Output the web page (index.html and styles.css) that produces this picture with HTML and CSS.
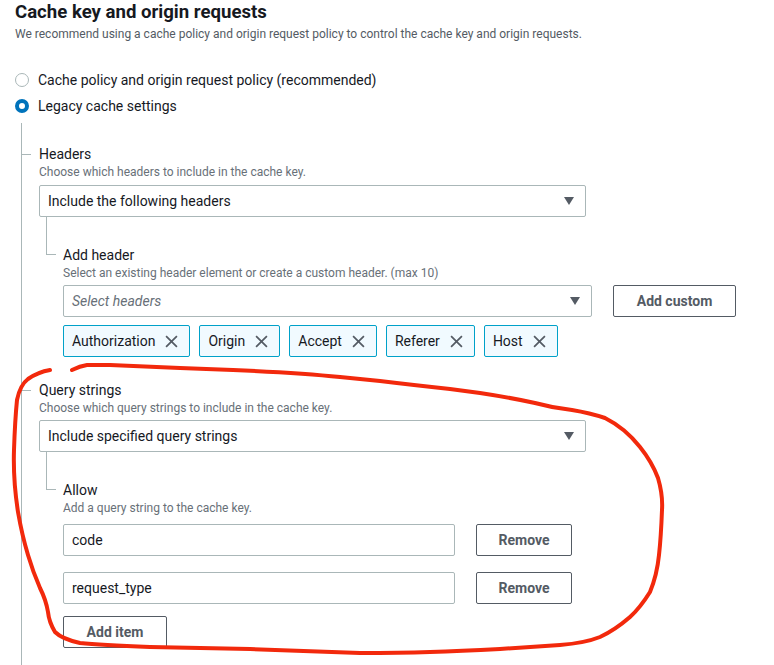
FILE: index.html
```html
<!DOCTYPE html>
<html>
<head>
<meta charset="utf-8">
<link rel="stylesheet" href="styles.css">
</head>
<body>
<div class="page">
  <h2 class="title">Cache key and origin requests</h2>
  <p class="subtitle">We recommend using a cache policy and origin request policy to control the cache key and origin requests.</p>

  <div class="radios">
    <label class="radio"><span class="dot"></span>Cache policy and origin request policy (recommended)</label>
    <label class="radio"><span class="dot checked"></span>Legacy cache settings</label>
  </div>

  <div class="tree">
    <div class="branch headers">
      <div class="label">Headers</div>
      <div class="desc">Choose which headers to include in the cache key.</div>
      <div class="select wide"><span>Include the following headers</span><span class="caret"></span></div>
      <div class="subtree">
        <div class="label">Add header</div>
        <div class="desc">Select an existing header element or create a custom header. (max 10)</div>
        <div class="row">
          <div class="select multi"><span class="ph">Select headers</span><span class="caret"></span></div>
          <button class="btn custom">Add custom</button>
        </div>
        <div class="tokens">
          <span class="token">Authorization<svg viewBox="0 0 12 12"><path d="M1 1L11 11M11 1L1 11"/></svg></span>
          <span class="token">Origin<svg viewBox="0 0 12 12"><path d="M1 1L11 11M11 1L1 11"/></svg></span>
          <span class="token">Accept<svg viewBox="0 0 12 12"><path d="M1 1L11 11M11 1L1 11"/></svg></span>
          <span class="token">Referer<svg viewBox="0 0 12 12"><path d="M1 1L11 11M11 1L1 11"/></svg></span>
          <span class="token">Host<svg viewBox="0 0 12 12"><path d="M1 1L11 11M11 1L1 11"/></svg></span>
        </div>
      </div>
    </div>

    <div class="branch query">
      <div class="label">Query strings</div>
      <div class="desc">Choose which query strings to include in the cache key.</div>
      <div class="select wide"><span>Include specified query strings</span><span class="caret"></span></div>
      <div class="subtree">
        <div class="label">Allow</div>
        <div class="desc">Add a query string to the cache key.</div>
        <div class="row item first">
          <div class="input">code</div>
          <button class="btn remove">Remove</button>
        </div>
        <div class="row item">
          <div class="input">request_type</div>
          <button class="btn remove">Remove</button>
        </div>
        <button class="btn additem">Add item</button>
      </div>
    </div>
  </div>

  <svg class="scribble" width="774" height="665" viewBox="0 0 774 665">
    <path d="M72,370 Q80,366 87,365 L110,365 Q133,366 180,368 L233,370 Q300,373 340,377 L380,381 Q413,385 450,389 L480,393 Q513,398 535,403 Q553,408 572,410 Q590,413 605,418 Q625,428 640,447 Q652,462 658,478 Q663,495 662,510 Q661,537 659,555 Q657,575 650,592 Q640,608 630,617 Q615,630 600,637 Q585,643 560,645 Q530,647 500,649 Q460,651 430,652 Q400,653 360,653 Q300,651 250,649 Q200,648 150,647 Q100,645 80,643 Q62,639 55,632 Q49,622 48,612 Q46,600 40,588 Q33,572 28,555 Q22,535 18,512 Q13,480 14,450 Q15,420 17,400 Q20,385 28,379 Q38,372 50,370"/>
  </svg>
</div>
</body>
</html>
```

FILE: styles.css
```css
* { box-sizing: border-box; }
html, body { margin: 0; padding: 0; background: #fff; }
body {
  font-family: Roboto, "Liberation Sans", Arial, sans-serif;
  color: #16191f;
  font-size: 14px;
}
.page {
  position: relative;
  width: 774px;
  height: 665px;
  overflow: hidden;
  padding-left: 15px;
}
.title {
  margin: 0;
  padding-top: 1px;
  font-size: 18.6px;
  line-height: 22px;
  font-weight: 700;
}
.subtitle {
  margin: 3px 0 0;
  font-size: 12px;
  line-height: 16px;
  color: #545b64;
}
.radios {
  margin-top: 28px;
  display: flex;
  flex-direction: column;
  gap: 6px;
}
.radio {
  display: flex;
  align-items: center;
  height: 20px;
  font-size: 14px;
  line-height: 20px;
}
.dot {
  width: 14px;
  height: 14px;
  border-radius: 50%;
  border: 1.5px solid #aab7b8;
  margin-right: 9px;
  flex: none;
}
.dot.checked {
  border: 4px solid #0073bb;
  background: #fff;
}
.tree {
  margin-left: 6px;
  margin-top: 7px;
  border-left: 1px solid #aab7b8;
  padding-left: 17px;
  padding-top: 21px;
  min-height: 560px;
}
.branch { position: relative; }
.branch::before {
  content: "";
  position: absolute;
  left: -18px;
  top: 10px;
  width: 10px;
  border-top: 1px solid #aab7b8;
}
.label {
  font-size: 14px;
  line-height: 20px;
}
.desc {
  font-size: 12px;
  line-height: 16px;
  color: #687078;
}
.select, .input {
  display: flex;
  align-items: center;
  justify-content: space-between;
  height: 32px;
  border: 1px solid #aab7b8;
  border-radius: 2px;
  padding: 0 11px 0 8px;
  font-size: 14px;
  background: #fff;
}
.select.wide { width: 547px; margin-top: 4px; }
.headers > .select.wide { margin-top: 5px; }
.caret {
  width: 0; height: 0;
  border-left: 5.5px solid transparent;
  border-right: 5.5px solid transparent;
  border-top: 8px solid #545b64;
}
.ph { font-style: italic; color: #687078; }
.subtree {
  position: relative;
  margin-left: 7px;
  padding-left: 17px;
  padding-top: 28px;
}
.subtree::before {
  content: "";
  position: absolute;
  left: 0;
  top: 0;
  width: 9px;
  height: 37px;
  border-left: 1px solid #aab7b8;
  border-bottom: 1px solid #aab7b8;
}
.subtree .desc { margin-bottom: 4px; }
.row {
  display: flex;
  align-items: center;
  gap: 21px;
}
.select.multi { width: 529px; }
.btn {
  font-family: inherit;
  height: 32px;
  border: 1px solid #545b64;
  border-radius: 2px;
  background: #fff;
  color: #545b64;
  font-weight: 700;
  font-size: 14px;
  padding: 0;
  cursor: pointer;
}
.btn.custom { width: 123px; }
.tokens {
  display: flex;
  gap: 9px;
  margin-top: 8px;
}
.token {
  display: flex;
  align-items: center;
  gap: 10px;
  height: 32px;
  padding: 0 11px 0 8px;
  background: #f1faff;
  border: 1px solid #00a1c9;
  border-radius: 2px;
  font-size: 14px;
}
.token svg {
  width: 13px;
  height: 13px;
  fill: none;
  stroke: #545b64;
  stroke-width: 1.6;
}
.branch.headers { margin-bottom: 23px; }
.row.item { margin-bottom: 16px; }
.row.item.first { margin-top: 8px; }
.input { width: 392px; }
.btn.remove { width: 96px; }
.btn.additem { width: 104px; margin-top: -4px; }
.scribble {
  position: absolute;
  left: 0;
  top: 0;
  pointer-events: none;
}
.scribble path {
  fill: none;
  stroke: #f2290c;
  stroke-width: 4;
  stroke-linecap: round;
  stroke-linejoin: round;
}
```
